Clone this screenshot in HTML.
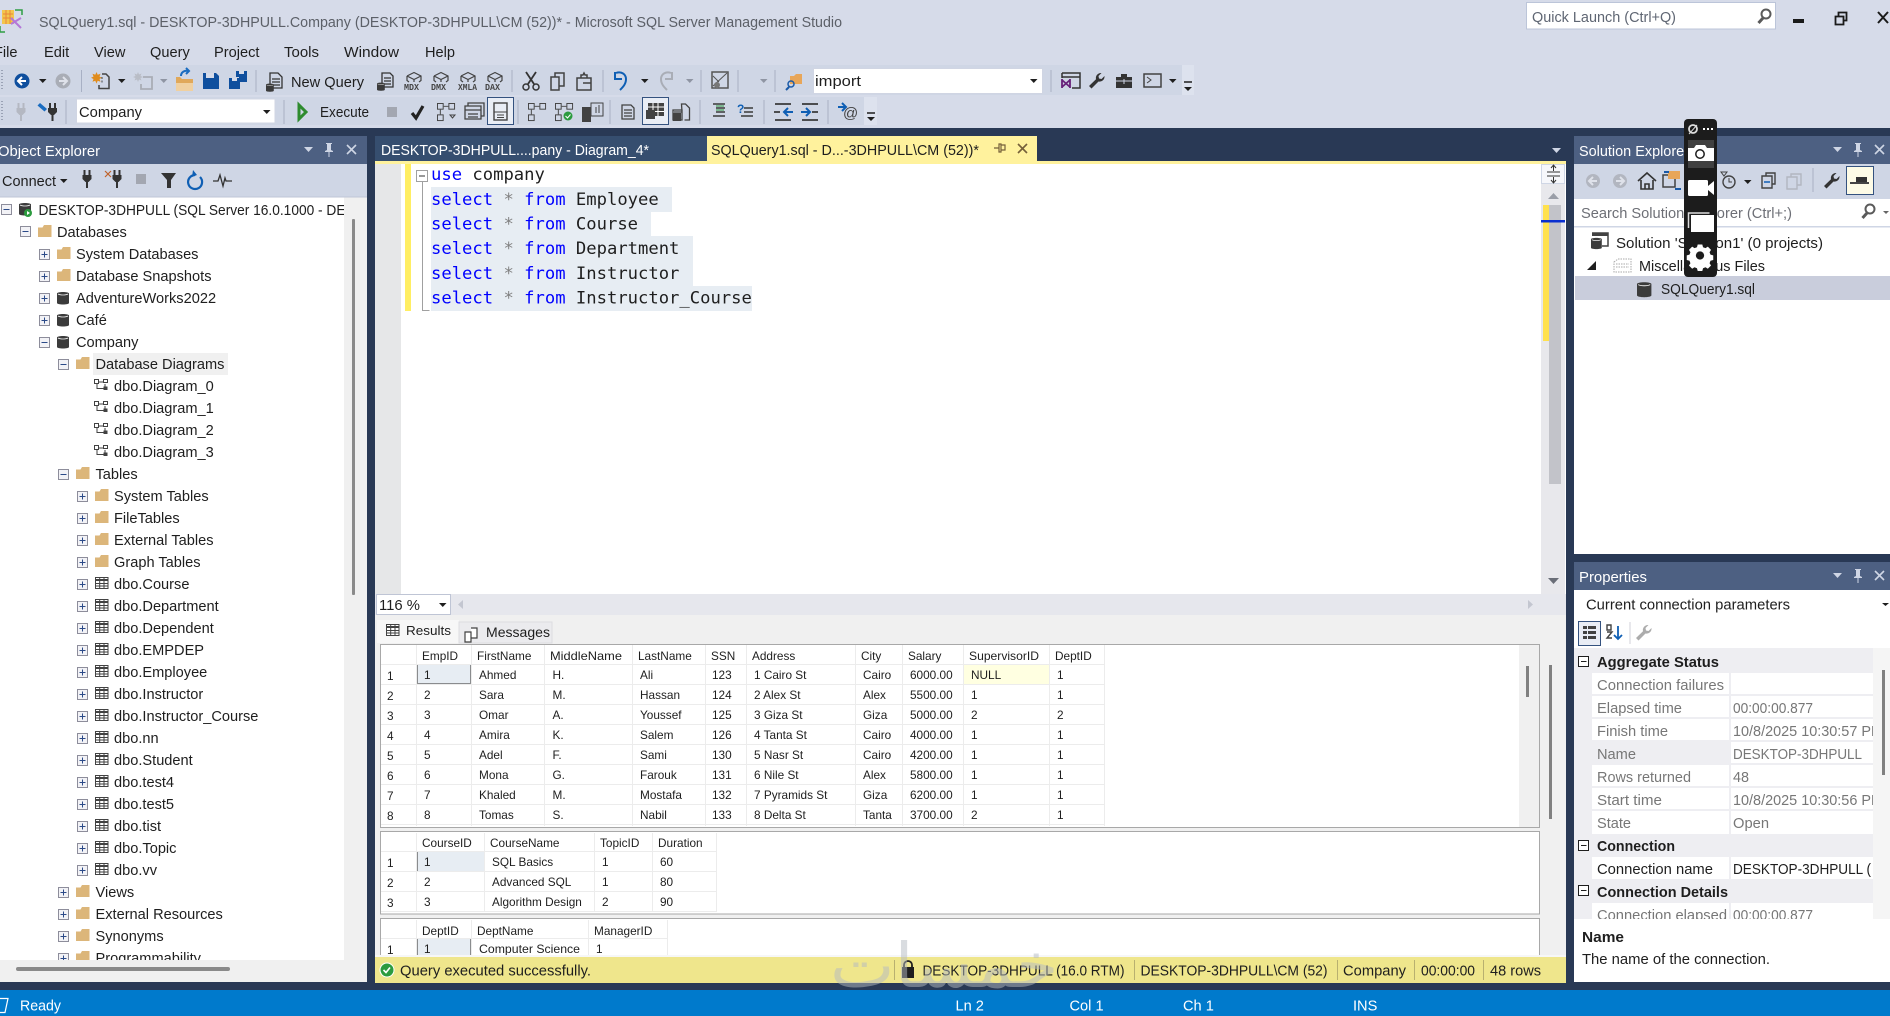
<!DOCTYPE html>
<html lang="en"><head><meta charset="utf-8"><title>SSMS</title>
<style>
html,body{margin:0;padding:0;background:#293955;width:1890px;height:1016px;overflow:hidden}
svg{display:block}
text{font-family:"Liberation Sans",sans-serif;font-size:14.6px;fill:#1e1e1e;white-space:pre}
.g text,text.g{font-size:11.8px;fill:#1e1e1e}
.c text{font-family:"DejaVu Sans Mono","Liberation Mono",monospace;font-size:17.2px}
.w{fill:#fff}
.d{fill:#777}
.b{font-weight:bold}
.k{fill:none;stroke:#424242;stroke-width:1.5}
.s{stroke:#a8b0c4;stroke-width:1;fill:none}
.l{font-family:"Liberation Mono",monospace;font-size:9.5px;font-weight:bold;fill:#444}
</style></head><body>
<svg xmlns="http://www.w3.org/2000/svg" width="1890" height="1016" viewBox="0 0 1890 1016">
<defs>
<g id="p"><rect x=".5" y=".5" width="10" height="10" fill="#f2f2f6" stroke="#8d8d9b"/><path d="M2.5 5.5h6M5.5 2.5v6" stroke="#2b4a88" stroke-width="1"/></g>
<g id="m"><rect x=".5" y=".5" width="10" height="10" fill="#f2f2f6" stroke="#8d8d9b"/><path d="M2.5 5.5h6" stroke="#2b4a88" stroke-width="1"/></g>
<path id="f" d="M0 2.5V12H13.500V0H6L4.500 2.500Z" fill="#dcb67a"/>
<g id="t"><rect x=".5" y=".5" width="12.500" height="11" fill="#fff" stroke="#424242"/><path d="M0 3h13.500" stroke="#424242" stroke-width="2"/><path d="M0 6.500h13M0 9h13M4.700 0v12M9 0v12" stroke="#424242" stroke-width="1"/></g>
<g id="dg"><path d="M3 5V9.500H10M5 3H10M11 5V10" fill="none" stroke="#424242"/><rect x=".5" y=".5" width="4" height="4" fill="#fff" stroke="#424242"/><rect x="9.500" y=".5" width="4" height="3" fill="#fff" stroke="#424242"/><rect x="9.500" y="7.500" width="4" height="3.500" fill="#424242"/></g>
<g id="cy"><path d="M0 2.500C0 .5 12 .5 12 2.500V12C12 14 0 14 0 12Z" fill="#3b3b3b"/><path d="M1 3c2 1.300 8 1.300 10 0" fill="none" stroke="#eee" stroke-width=".8"/></g>
<path id="x" d="M0 0L9 9M9 0L0 9" fill="none" stroke-width="1.6"/>
<g id="pin"><path d="M2 0h6v1H7v6l2 1v1H1V8l2-1V1H2zM4.500 9v5h1V9z" fill="#cfd6e5"/></g>
<path id="dd" d="M0 0h7.500L3.750 4z" fill="#1e1e1e"/>
<path id="ddg" d="M0 0h7.500L3.750 4z" fill="#8f95a3"/>
<g id="cube"><path d="M1 4L8 .5l7 3.500v4.500l-2 1.500M3 10L1 8.500V4M1 4l7 3.500 7-3.500M8 7.500v2.500" fill="none" stroke="#424242" stroke-width="1.200"/></g>
<g id="wr"><path d="M12 0a5 5 0 0 0-5 6.200L0 13l2.500 2.500 7-7A5 5 0 0 0 15.500 3l-3 3-2.500-.5L9.500 3l3-3z" fill="#333"/></g>
<g id="flow"><rect x=".5" y=".5" width="6" height="6" fill="none" stroke="#424242"/><rect x="12.500" y=".5" width="6" height="6" fill="none" stroke="#424242"/><rect x=".5" y="12.500" width="6" height="6" fill="none" stroke="#424242"/><path d="M7 3.500h5M3.500 7v5" stroke="#424242"/></g>
<g id="plug"><path d="M2 0v5M7 0v5" stroke="currentColor" stroke-width="2" fill="none"/><path d="M0 5h9v4l-3 3h-3L0 9zM3.500 12h2v6h-2z" fill="currentColor"/></g>
</defs>

<!-- chrome -->
<rect width="1890" height="1016" fill="#293955"/>
<rect width="1890" height="128" fill="#d6dbe9"/>
<rect x="0" y="65" width="1182" height="30" fill="#cfd6e5"/><rect x="1182" y="65" width="12" height="30" fill="#dde2ee"/>
<rect x="0" y="97" width="864" height="28" fill="#cfd6e5"/><rect x="864" y="97" width="13" height="28" fill="#dde2ee"/>

<!-- logo -->
<rect x="2" y="10" width="12" height="14" fill="#f3c64d"/><path d="M3 14h10M3 18h10M6 10v14M10 10v14" stroke="#e8863a" stroke-width="1"/>
<path d="M11 24L21 18M11 18l10 10" stroke="#b478d8" stroke-width="2" fill="none"/><path d="M15 10h7v5M0 26v6h5" stroke="#2f9e44" stroke-width="1.500" fill="none"/>

<text x="39" y="27" textLength="803" lengthAdjust="spacingAndGlyphs" style="fill:#5c6068">SQLQuery1.sql - DESKTOP-3DHPULL.Company (DESKTOP-3DHPULL\CM (52))* - Microsoft SQL Server Management Studio</text>
<rect x="1526.500" y="2.500" width="249" height="26.500" fill="#fff" stroke="#bcc5d9"/>
<text x="1532" y="22" style="fill:#5f6673" textLength="144" lengthAdjust="spacingAndGlyphs">Quick Launch (Ctrl+Q)</text>
<circle cx="1766" cy="14" r="4.500" fill="none" stroke="#5a5a5a" stroke-width="2"/><path d="M1763 18l-4.500 5" stroke="#5a5a5a" stroke-width="3"/>
<rect x="1793" y="19" width="11" height="4" fill="#1a1a1a"/>
<path d="M1835.500 16.500h8v8h-8zM1838.500 16v-3.500h8v8H1844" fill="none" stroke="#1a1a1a" stroke-width="1.800"/>
<path d="M1878 12l10 11M1888 12l-10 11" stroke="#1a1a1a" stroke-width="2" fill="none"/>

<!-- menu -->
<g style="fill:#1e1e1e"><text x="-6" y="57">File</text><text x="44" y="57">Edit</text><text x="94" y="57">View</text><text x="150" y="57">Query</text><text x="214" y="57">Project</text><text x="284" y="57" textLength="35" lengthAdjust="spacingAndGlyphs">Tools</text><text x="344" y="57" textLength="55" lengthAdjust="spacingAndGlyphs">Window</text><text x="425" y="57">Help</text></g>

<!-- toolbar 1 -->
<path d="M2 70v20" stroke="#9aa2b5" stroke-width="2" stroke-dasharray="1 2"/>
<circle cx="22" cy="81" r="7.500" fill="#0f4f9e"/><path d="M26 81h-7M22 77l-4 4 4 4" fill="none" stroke="#fff" stroke-width="2"/>
<use href="#dd" x="39" y="79"/>
<circle cx="63" cy="81" r="7.500" fill="#a9adb6"/><path d="M59 81h7M63 77l4 4-4 4" fill="none" stroke="#dfe2ea" stroke-width="2"/>
<path d="M81.500 70v22" class="s"/>
<path d="M96.500 72l1.200 2.800 2.800-1-1 2.800 2.500 1.200-2.500 1.200 1 2.800-2.800-1-1.200 2.800-1.200-2.800-2.800 1 1-2.800-2.500-1.200 2.500-1.200-1-2.800 2.800 1z" fill="#e08c1d"/>
<path d="M102 74h4l3 3v11.500h-10V85" fill="none" stroke="#444" stroke-width="1.500"/><path d="M102 77v7" stroke="#444" stroke-dasharray="2 1.500"/>
<use href="#dd" x="118" y="79"/>
<path d="M138 72l1 2.500 2.500-1-1 2.500 2.500 1-2.500 1 1 2.500-2.500-1-1 2.500-1-2.500-2.500 1 1-2.500-2.500-1 2.500-1-1-2.500 2.500 1z" fill="#b9bdc6"/><path d="M143 77h9v12h-11v-5" fill="none" stroke="#a9adb6" stroke-width="1.800"/>
<use href="#ddg" x="160" y="79"/>
<path d="M176 77h4l2 2h11v12h-17z" fill="#e0a85a"/><path d="M176 83h17v8h-17z" fill="#f0d0a0"/><path d="M181 76c0-4 4-6 7-5M186 68l3 3-3 3" fill="none" stroke="#1a6cc0" stroke-width="2"/>
<path d="M203 73h13l3 3v13h-16z" fill="#0f4f9e"/><rect x="206" y="73" width="8" height="5" fill="#d6dbe9"/>
<path d="M229 78h11v11h-11z" fill="#0f4f9e"/><rect x="232" y="78" width="5" height="3" fill="#d6dbe9"/><path d="M236 71h11l0 11h-8v-5h-3z" fill="#0f4f9e"/><rect x="239" y="71" width="5" height="3" fill="#d6dbe9"/>
<path d="M256 70v22" class="s"/>
<path d="M270 73h8l4 4v11h-12zM272 79h8M272 82h8M272 85h8" fill="none" stroke="#333" stroke-width="1.300"/><use href="#cy" transform="translate(266 83) scale(.65)"/>
<text x="291" y="87" textLength="73" lengthAdjust="spacingAndGlyphs">New Query</text>
<path d="M382 73h8l3 3v11h-11zM384 78h7M384 81h7M384 84h7" fill="none" stroke="#333" stroke-width="1.300"/><use href="#cy" transform="translate(377 82) scale(.65)"/>
<use href="#cube" x="406" y="72"/><use href="#cube" x="433" y="72"/><use href="#cube" x="460" y="72"/><use href="#cube" x="487" y="72"/>
<text class="l" x="404" y="90" textLength="15" lengthAdjust="spacingAndGlyphs">MDX</text><text class="l" x="431" y="90" textLength="15" lengthAdjust="spacingAndGlyphs">DMX</text><text class="l" x="458" y="90" textLength="19" lengthAdjust="spacingAndGlyphs">XMLA</text><text class="l" x="485" y="90" textLength="15" lengthAdjust="spacingAndGlyphs">DAX</text>
<path d="M512 70v22" class="s"/>
<path d="M526 72l8 12M536 72l-8 12" stroke="#333" stroke-width="1.800" fill="none"/><circle cx="526" cy="87" r="3" fill="none" stroke="#333" stroke-width="1.500"/><circle cx="536" cy="87" r="3" fill="none" stroke="#333" stroke-width="1.500"/>
<path d="M551 77h8v13h-8zM555 77v-4h9v13h-5" fill="none" stroke="#424242" stroke-width="1.500"/>
<path d="M577 78h14v12h-14zM581 78v-3h2l1-2 1 2h2v3M583 83h8v7h-8" fill="none" stroke="#424242" stroke-width="1.500"/>
<path d="M603 70v22" class="s"/>
<path d="M616 73c5-2 10 1 10 6 0 5-3 8-6 11" fill="none" stroke="#0f5fb4" stroke-width="2"/><path d="M615 72v7h7" fill="none" stroke="#0f5fb4" stroke-width="2"/>
<use href="#dd" x="641" y="79"/>
<path d="M671 73c-5-2-10 1-10 6 0 5 3 8 6 11" fill="none" stroke="#a9adb6" stroke-width="2"/><path d="M672 72v7h-7" fill="none" stroke="#a9adb6" stroke-width="2"/>
<use href="#ddg" x="686" y="79"/>
<path d="M701 70v22" class="s"/>
<rect x="712" y="72" width="16" height="16" fill="none" stroke="#555" stroke-width="1.500"/><path d="M713 86l14-13M713 76l6 6" stroke="#555" fill="none"/><circle cx="717" cy="85" r="3" fill="#777"/>
<path d="M738 70v22" class="s"/><use href="#ddg" x="760" y="79"/><path d="M775 70v22" class="s"/>
<path d="M790 76h4l2-2h6v10h-12z" fill="#e8a659"/><circle cx="791" cy="84" r="3" fill="none" stroke="#1a5aa8" stroke-width="1.500"/><path d="M789 87l-3 3" stroke="#1a5aa8" stroke-width="2"/>
<rect x="813.500" y="68.500" width="229" height="25" fill="#fff" stroke="#d0d5e3"/><text x="815" y="86" textLength="46" lengthAdjust="spacingAndGlyphs">import</text><use href="#dd" x="1030" y="79"/>
<path d="M1051 70v22" class="s"/>
<path d="M1062 73h18v15h-8M1062 73v5M1062 77h18" fill="none" stroke="#333" stroke-width="1.500"/><path d="M1062 80l8 7M1062 87l8-7M1062 79v9M1070 79v9" stroke="#68217a" stroke-width="1.800" fill="none"/>
<use href="#wr" x="1089" y="73"/>
<path d="M1116 77h16v11h-16zM1121 77v-3h6v3" fill="#333"/><path d="M1116 81h16M1124 79v5" stroke="#cfd6e5"/>
<rect x="1144" y="74" width="17" height="13" fill="none" stroke="#424242" stroke-width="1.500"/><path d="M1147 77l4 3-4 3" fill="none" stroke="#424242"/>
<use href="#dd" x="1169" y="79"/>
<path d="M1184 82h8" stroke="#1e1e1e" stroke-width="1.500"/><path d="M1184 87h8L1188 91z" fill="#1e1e1e"/>

<!-- toolbar 2 -->
<path d="M2 101v20" stroke="#9aa2b5" stroke-width="2" stroke-dasharray="1 2"/>
<use href="#plug" x="16.500" y="103" style="color:#b4b8c2"/>
<use href="#plug" x="48" y="103" style="color:#333"/><path d="M40 103l7 6-2.500 2.500-7-6z" fill="#1a6cc0"/>
<path d="M66 100v24" class="s"/>
<rect x="76.500" y="99" width="198.500" height="24" fill="#fff" stroke="#d0d5e3"/><text x="79" y="117" textLength="63" lengthAdjust="spacingAndGlyphs">Company</text><use href="#dd" x="263" y="110"/>
<path d="M284 100v24" class="s"/>
<path d="M299 105l7 7-7 7z" fill="none" stroke="#2e8b2e" stroke-width="3"/>
<text x="320" y="117" textLength="49" lengthAdjust="spacingAndGlyphs">Execute</text>
<rect x="387" y="107" width="10" height="10" fill="#a3a7b1"/>
<path d="M412 113l4 5 7-12" fill="none" stroke="#222" stroke-width="3.200"/>
<use href="#flow" transform="translate(437 103) scale(.95)"/><path d="M450 115h5l-2.500 3z" fill="none" stroke="#424242"/>
<path d="M465 106h16v13h-16zM465 110h16M468 114h10M468 117h10M468 106v-3h16v13h-3" fill="none" stroke="#424242" stroke-width="1.300"/>
<rect x="487.500" y="97.500" width="26" height="27" fill="#e9edf5" stroke="#34527f" stroke-width="1"/><rect x="494" y="103" width="13" height="17" fill="none" stroke="#424242" stroke-width="1.400"/><path d="M494 112h13M497 115h7M497 117.500h7" stroke="#424242"/>
<path d="M518 100v24" class="s"/>
<use href="#flow" transform="translate(528 103) scale(.95)"/>
<use href="#flow" transform="translate(555 103) scale(.95)"/><circle cx="568" cy="116" r="4.500" fill="#2c9b3f"/><path d="M565.500 116l2 2 3-3.500" stroke="#fff" fill="none"/>
<rect x="582" y="107" width="9" height="15" fill="#424242"/><rect x="591" y="103" width="12" height="13" fill="none" stroke="#424242"/><path d="M596 107v6M599 105v8" stroke="#424242"/>
<path d="M610 100v24" class="s"/>
<path d="M622 105h9l3 3v11h-12zM624 110h8M624 113h8M624 116h8" fill="none" stroke="#424242" stroke-width="1.300"/>
<rect x="642.500" y="97.500" width="26" height="27" fill="#e9edf5" stroke="#34527f" stroke-width="1"/><g transform="translate(648 103)"><rect width="16" height="13" fill="#424242"/><path d="M0 4h16M0 8.500h16M5 0v13M10 0v13" stroke="#fff"/><rect x="-2" y="7" width="9" height="9" fill="#424242"/></g>
<path d="M674 112h8l-.5-8h4l4 4v12h-5M673 110h9v10h-9z" fill="none" stroke="#424242" stroke-width="1.300"/><rect x="673" y="113" width="8" height="8" fill="#424242"/>
<path d="M700 100v24" class="s"/>
<path d="M713 104h12M716 108h9M716 112h9M713 116h12" stroke="#3a3a3a" stroke-width="1.500"/><path d="M716 106h8M716 110h8" stroke="#2c9b3f"/>
<text x="737" y="113" style="fill:#0f5fb4;font-weight:bold;font-size:12px">?</text><path d="M744 108h9M744 112h9M741 116h12" stroke="#3a3a3a" stroke-width="1.500"/>
<path d="M764 100v24" class="s"/>
<path d="M775 104h16M775 120h16M774 112h6" stroke="#3a3a3a" stroke-width="1.800"/><path d="M793 112h-9M788 108l-4 4 4 4" stroke="#0f5fb4" stroke-width="2" fill="none"/>
<path d="M802 104h16M802 120h16M812 112h6" stroke="#3a3a3a" stroke-width="1.800"/><path d="M801 112h9M806 108l4 4-4 4" stroke="#0f5fb4" stroke-width="2" fill="none"/>
<path d="M828 100v24" class="s"/>
<path d="M838 107h7M842 103l4 4-4 4" stroke="#0f5fb4" stroke-width="2" fill="none"/><text x="843" y="118" style="font-size:15px;fill:#424242">@</text>
<path d="M867 113h8" stroke="#1e1e1e" stroke-width="1.500"/><path d="M867 117h8L871 121z" fill="#1e1e1e"/>

<!-- Object Explorer -->
<rect x="0" y="136" width="367" height="846" fill="#f0f0f0"/>
<rect x="0" y="136" width="367" height="28" fill="#4d6082"/>
<text class="w" x="-2" y="156" textLength="102" lengthAdjust="spacingAndGlyphs">Object Explorer</text>
<path d="M304 147h9l-4.500 5z" fill="#cfd6e5"/><use href="#pin" x="324" y="143"/><use href="#x" x="347" y="145" stroke="#cfd6e5"/>
<rect x="0" y="164" width="367" height="33" fill="#cfd6e5"/>
<text x="2" y="186" textLength="54" lengthAdjust="spacingAndGlyphs">Connect</text><use href="#dd" x="60" y="179"/>
<use href="#plug" x="82.500" y="170" style="color:#333"/>
<use href="#plug" x="112.500" y="170" style="color:#333"/><path d="M105 171l6 6M111 171l-6 6" stroke="#c0622a" stroke-width="1.200"/>
<rect x="136" y="174" width="10" height="10" fill="#a3a7b1"/>
<path d="M161 173h15l-5 7v8h-4v-8z" fill="#333"/>
<path d="M195 175a7 7 0 1 0 5 2" fill="none" stroke="#0f5fb4" stroke-width="2.200"/><path d="M193 170l4 5-5 2z" fill="#0f5fb4"/>
<path d="M213 181h5l2-6 3 11 2-8 1 3h6" fill="none" stroke="#333" stroke-width="1.300"/>
<rect x="0" y="197" width="344" height="763" fill="#fff"/>
<rect x="0" y="196.500" width="367" height="1" fill="#bfc6d6"/>
<rect x="352" y="219" width="3" height="376" rx="1" fill="#8a8a8a"/>
<rect x="16" y="967" width="214" height="4" rx="2" fill="#8a8a8a"/>
<rect x="93" y="353" width="135" height="22" fill="#f0f0f0"/>

<svg x="0" y="197" width="344" height="763" viewBox="0 197 344 763">
<use href="#m" x="1" y="204"/>
<use href="#cy" x="19" y="202"/><circle cx="28" cy="213" r="4" fill="#2c9b3f"/><path d="M27 211v4l3-2z" fill="#fff"/>
<text x="38.500" y="215" textLength="307" lengthAdjust="spacingAndGlyphs">DESKTOP-3DHPULL (SQL Server 16.0.1000 - DE</text>
<use href="#m" x="20" y="226"/><use href="#f" x="38" y="225"/><text x="57" y="237">Databases</text>
<use href="#p" x="39" y="249"/><use href="#f" x="57" y="247"/><text x="76" y="259">System Databases</text>
<use href="#p" x="39" y="271"/><use href="#f" x="57" y="269"/><text x="76" y="281">Database Snapshots</text>
<use href="#p" x="39" y="293"/><use href="#cy" x="57" y="291"/><text x="76" y="303">AdventureWorks2022</text>
<use href="#p" x="39" y="315"/><use href="#cy" x="57" y="313"/><text x="76" y="325">Café</text>
<use href="#m" x="39" y="337"/><use href="#cy" x="57" y="335"/><text x="76" y="347">Company</text>
<use href="#m" x="58" y="359"/><use href="#f" x="76" y="357"/><text x="95.500" y="369">Database Diagrams</text>
<use href="#dg" x="94" y="379"/><text x="114" y="391">dbo.Diagram_0</text>
<use href="#dg" x="94" y="401"/><text x="114" y="413">dbo.Diagram_1</text>
<use href="#dg" x="94" y="423"/><text x="114" y="435">dbo.Diagram_2</text>
<use href="#dg" x="94" y="445"/><text x="114" y="457">dbo.Diagram_3</text>
<use href="#m" x="58" y="469"/><use href="#f" x="76" y="467"/><text x="95.500" y="479">Tables</text>
<use href="#p" x="77" y="491"/><use href="#f" x="95" y="489"/><text x="114" y="501">System Tables</text>
<use href="#p" x="77" y="513"/><use href="#f" x="95" y="511"/><text x="114" y="523">FileTables</text>
<use href="#p" x="77" y="535"/><use href="#f" x="95" y="533"/><text x="114" y="545">External Tables</text>
<use href="#p" x="77" y="557"/><use href="#f" x="95" y="555"/><text x="114" y="567">Graph Tables</text>
<use href="#p" x="77" y="579"/><use href="#t" x="95" y="577"/><text x="114" y="589">dbo.Course</text>
<use href="#p" x="77" y="601"/><use href="#t" x="95" y="599"/><text x="114" y="611">dbo.Department</text>
<use href="#p" x="77" y="623"/><use href="#t" x="95" y="621"/><text x="114" y="633">dbo.Dependent</text>
<use href="#p" x="77" y="645"/><use href="#t" x="95" y="643"/><text x="114" y="655">dbo.EMPDEP</text>
<use href="#p" x="77" y="667"/><use href="#t" x="95" y="665"/><text x="114" y="677">dbo.Employee</text>
<use href="#p" x="77" y="689"/><use href="#t" x="95" y="687"/><text x="114" y="699">dbo.Instructor</text>
<use href="#p" x="77" y="711"/><use href="#t" x="95" y="709"/><text x="114" y="721">dbo.Instructor_Course</text>
<use href="#p" x="77" y="733"/><use href="#t" x="95" y="731"/><text x="114" y="743">dbo.nn</text>
<use href="#p" x="77" y="755"/><use href="#t" x="95" y="753"/><text x="114" y="765">dbo.Student</text>
<use href="#p" x="77" y="777"/><use href="#t" x="95" y="775"/><text x="114" y="787">dbo.test4</text>
<use href="#p" x="77" y="799"/><use href="#t" x="95" y="797"/><text x="114" y="809">dbo.test5</text>
<use href="#p" x="77" y="821"/><use href="#t" x="95" y="819"/><text x="114" y="831">dbo.tist</text>
<use href="#p" x="77" y="843"/><use href="#t" x="95" y="841"/><text x="114" y="853">dbo.Topic</text>
<use href="#p" x="77" y="865"/><use href="#t" x="95" y="863"/><text x="114" y="875">dbo.vv</text>
<use href="#p" x="58" y="887"/><use href="#f" x="76" y="885"/><text x="95.500" y="897">Views</text>
<use href="#p" x="58" y="909"/><use href="#f" x="76" y="907"/><text x="95.500" y="919">External Resources</text>
<use href="#p" x="58" y="931"/><use href="#f" x="76" y="929"/><text x="95.500" y="941">Synonyms</text>
<use href="#p" x="58" y="953"/><use href="#f" x="76" y="951"/><text x="95.500" y="963">Programmability</text>
</svg>

<!-- Tabs -->
<rect x="375" y="136" width="332" height="25" fill="#364e6f"/>
<text class="w" x="381" y="155" textLength="268" lengthAdjust="spacingAndGlyphs">DESKTOP-3DHPULL....pany - Diagram_4*</text>
<rect x="707" y="136" width="330" height="25" fill="#fff29d"/>
<text x="711" y="155" textLength="268" lengthAdjust="spacingAndGlyphs">SQLQuery1.sql - D...-3DHPULL\CM (52))*</text>
<path d="M994 148h5M999 144v8h2v-8zM1001 145h4v5h-4" fill="none" stroke="#75603a" stroke-width="1.200"/>
<use href="#x" x="1018" y="144" stroke="#75603a"/>
<path d="M1552 148h9l-4.500 5z" fill="#cfd6e5"/>

<!-- Editor -->
<rect x="375" y="161" width="1191" height="3" fill="#fff29d"/>
<rect x="375" y="164" width="1191" height="430" fill="#fff"/>
<rect x="375" y="164" width="26" height="430" fill="#e6e7e8"/>
<rect x="405" y="164" width="6" height="147" fill="#ffee62"/>
<rect x="416.500" y="170.500" width="11" height="11" fill="#fff" stroke="#a0a0a0"/><path d="M419 176h6" stroke="#333"/>
<path d="M422.500 182v128.500h7" fill="none" stroke="#a0a0a0"/>
<g fill="#e7edf3"><rect x="431" y="187" width="241" height="25"/><rect x="431" y="212" width="220" height="25"/><rect x="431" y="236" width="262" height="25"/><rect x="431" y="261" width="262" height="25"/><rect x="431" y="286" width="321" height="25"/></g>
<g class="c">
<text x="431" y="180"><tspan style="fill:#0000ff">use</tspan> company</text>
<text x="431" y="205"><tspan style="fill:#0000ff">select</tspan> <tspan style="fill:#808080">*</tspan> <tspan style="fill:#0000ff">from</tspan> Employee</text>
<text x="431" y="229.500"><tspan style="fill:#0000ff">select</tspan> <tspan style="fill:#808080">*</tspan> <tspan style="fill:#0000ff">from</tspan> Course</text>
<text x="431" y="254"><tspan style="fill:#0000ff">select</tspan> <tspan style="fill:#808080">*</tspan> <tspan style="fill:#0000ff">from</tspan> Department</text>
<text x="431" y="279"><tspan style="fill:#0000ff">select</tspan> <tspan style="fill:#808080">*</tspan> <tspan style="fill:#0000ff">from</tspan> Instructor</text>
<text x="431" y="303.500"><tspan style="fill:#0000ff">select</tspan> <tspan style="fill:#808080">*</tspan> <tspan style="fill:#0000ff">from</tspan> Instructor_Course</text>
</g>
<!-- editor scroll -->
<rect x="1541" y="164" width="24" height="430" fill="#e8e8ec"/>
<rect x="1541.500" y="164.500" width="23" height="19" fill="#f6f7fb" stroke="#cfd6e5"/>
<path d="M1547 172h13M1547 176h13" stroke="#333"/><path d="M1553.500 165v6M1553.500 177v6M1551 168l2.500-3 2.500 3M1551 180l2.500 3 2.500-3" fill="none" stroke="#333"/>
<path d="M1548 199h11l-5.500-6z" fill="#9a9ea8"/>
<rect x="1549" y="205" width="12" height="279" fill="#c2c3c9"/>
<rect x="1543" y="205" width="6" height="136" fill="#ffe14e"/>
<rect x="1541" y="220" width="24" height="2.500" fill="#0a2fd0"/>
<path d="M1548 578h11l-5.500 6z" fill="#6a6e78"/>
<!-- zoom bar -->
<rect x="375" y="594" width="1191" height="21" fill="#e6e7ed"/>
<rect x="376.500" y="594.500" width="74" height="20" fill="#fff" stroke="#bfc5d5"/>
<text x="379" y="610" textLength="41" lengthAdjust="spacingAndGlyphs">116 %</text><use href="#dd" x="439" y="603"/>
<path d="M463 600v9l-5-4.500z" fill="#c3c6d0"/><path d="M1528 600v9l5-4.500z" fill="#c3c6d0"/>

<!-- results -->
<rect x="375" y="615" width="1191" height="342" fill="#f0f0f0"/>
<rect x="377" y="620" width="82" height="23" fill="#f7f7f7"/>
<rect x="459" y="622" width="93" height="21" fill="#ebebee" stroke="#dcdce0"/>
<g transform="translate(386 624)"><use href="#t"/></g>
<text x="406" y="635" style="font-size:13px" textLength="45" lengthAdjust="spacingAndGlyphs">Results</text>
<path d="M465 632h6v10h-6zM471 628h6v10h-6" fill="#fff" stroke="#424242" stroke-width="1.200"/>
<text x="486" y="637" style="font-size:13.500px" textLength="64" lengthAdjust="spacingAndGlyphs">Messages</text>

<rect x="380.500" y="644.500" width="1159" height="183" fill="#fff" stroke="#a8a8a8"/>
<rect x="1519" y="645" width="20" height="182" fill="#f0f0f0"/>
<rect x="1526" y="666" width="3" height="31" fill="#808080"/>
<rect x="1549" y="665" width="3" height="154" fill="#808080"/>
<rect x="963" y="664" width="86" height="20" fill="#ffffe1"/>
<rect x="417.500" y="664.500" width="53" height="19" fill="#e7edf3" stroke="#222" stroke-dasharray="1 1"/>
<path d="M381 664.500H1104M381 684.500H1104M381 704.500H1104M381 724.500H1104M381 744.500H1104M381 764.500H1104M381 784.500H1104M381 804.500H1104M381 824.500H1104M416.500 645V826M471.500 645V826M544.500 645V826M632.500 645V826M705.500 645V826M746.500 645V826M855.500 645V826M902.500 645V826M963.500 645V826M1049.500 645V826M1104.500 645V826" stroke="#ececec" fill="none"/>
<g class="g">
<text x="422" y="660">EmpID</text><text x="477" y="660">FirstName</text><text x="550" y="660" textLength="72" lengthAdjust="spacingAndGlyphs">MiddleName</text><text x="638" y="660">LastName</text><text x="711" y="660">SSN</text><text x="752" y="660">Address</text><text x="861" y="660">City</text><text x="908" y="660">Salary</text><text x="969" y="660" textLength="70" lengthAdjust="spacingAndGlyphs">SupervisorID</text><text x="1055" y="660">DeptID</text>
<text x="387" y="680">1</text><text x="424" y="679">1</text><text x="479" y="679">Ahmed</text><text x="552.500" y="679">H.</text><text x="640" y="679">Ali</text><text x="712" y="679">123</text><text x="754" y="679">1 Cairo St</text><text x="863" y="679">Cairo</text><text x="910" y="679">6000.00</text><text x="971" y="679">NULL</text><text x="1057" y="679">1</text>
<text x="387" y="700">2</text><text x="424" y="699">2</text><text x="479" y="699">Sara</text><text x="552.500" y="699">M.</text><text x="640" y="699">Hassan</text><text x="712" y="699">124</text><text x="754" y="699">2 Alex St</text><text x="863" y="699">Alex</text><text x="910" y="699">5500.00</text><text x="971" y="699">1</text><text x="1057" y="699">1</text>
<text x="387" y="720">3</text><text x="424" y="719">3</text><text x="479" y="719">Omar</text><text x="552.500" y="719">A.</text><text x="640" y="719">Youssef</text><text x="712" y="719">125</text><text x="754" y="719">3 Giza St</text><text x="863" y="719">Giza</text><text x="910" y="719">5000.00</text><text x="971" y="719">2</text><text x="1057" y="719">2</text>
<text x="387" y="740">4</text><text x="424" y="739">4</text><text x="479" y="739">Amira</text><text x="552.500" y="739">K.</text><text x="640" y="739">Salem</text><text x="712" y="739">126</text><text x="754" y="739">4 Tanta St</text><text x="863" y="739">Cairo</text><text x="910" y="739">4000.00</text><text x="971" y="739">1</text><text x="1057" y="739">1</text>
<text x="387" y="760">5</text><text x="424" y="759">5</text><text x="479" y="759">Adel</text><text x="552.500" y="759">F.</text><text x="640" y="759">Sami</text><text x="712" y="759">130</text><text x="754" y="759">5 Nasr St</text><text x="863" y="759">Cairo</text><text x="910" y="759">4200.00</text><text x="971" y="759">1</text><text x="1057" y="759">1</text>
<text x="387" y="780">6</text><text x="424" y="779">6</text><text x="479" y="779">Mona</text><text x="552.500" y="779">G.</text><text x="640" y="779">Farouk</text><text x="712" y="779">131</text><text x="754" y="779">6 Nile St</text><text x="863" y="779">Alex</text><text x="910" y="779">5800.00</text><text x="971" y="779">1</text><text x="1057" y="779">1</text>
<text x="387" y="800">7</text><text x="424" y="799">7</text><text x="479" y="799">Khaled</text><text x="552.500" y="799">M.</text><text x="640" y="799">Mostafa</text><text x="712" y="799">132</text><text x="754" y="799">7 Pyramids St</text><text x="863" y="799">Giza</text><text x="910" y="799">6200.00</text><text x="971" y="799">1</text><text x="1057" y="799">1</text>
<text x="387" y="820">8</text><text x="424" y="819">8</text><text x="479" y="819">Tomas</text><text x="552.500" y="819">S.</text><text x="640" y="819">Nabil</text><text x="712" y="819">133</text><text x="754" y="819">8 Delta St</text><text x="863" y="819">Tanta</text><text x="910" y="819">3700.00</text><text x="971" y="819">2</text><text x="1057" y="819">1</text>
</g>

<rect x="380.500" y="831.500" width="1159" height="82.500" fill="#fff" stroke="#a8a8a8"/>
<rect x="417.500" y="851.500" width="67" height="20" fill="#e7edf3" stroke="#222" stroke-dasharray="1 1"/>
<path d="M381 851.500H716M381 871.500H716M381 891.500H716M381 911.500H716M416.500 833V912M484.500 833V912M594.500 833V912M652.500 833V912M716.500 833V912" stroke="#ececec" fill="none"/>
<g class="g">
<text x="422" y="847">CourseID</text><text x="490" y="847">CourseName</text><text x="600" y="847">TopicID</text><text x="658" y="847">Duration</text>
<text x="387" y="867">1</text><text x="424" y="866">1</text><text x="492" y="866">SQL Basics</text><text x="602" y="866">1</text><text x="660" y="866">60</text>
<text x="387" y="887">2</text><text x="424" y="886">2</text><text x="492" y="886">Advanced SQL</text><text x="602" y="886">1</text><text x="660" y="886">80</text>
<text x="387" y="907">3</text><text x="424" y="906">3</text><text x="492" y="906">Algorithm Design</text><text x="602" y="906">2</text><text x="660" y="906">90</text>
</g>

<rect x="380.500" y="918.500" width="1159" height="60" fill="#fff" stroke="#a8a8a8"/>
<rect x="417.500" y="938.500" width="53" height="20" fill="#e7edf3" stroke="#222" stroke-dasharray="1 1"/>
<path d="M381 938.500H667M381 958.500H667M416.500 920V960M471.500 920V960M588.500 920V960M667.500 920V960" stroke="#ececec" fill="none"/>
<g class="g">
<text x="422" y="935">DeptID</text><text x="477" y="935">DeptName</text><text x="594" y="935">ManagerID</text>
<text x="387" y="954">1</text><text x="424" y="953">1</text><text x="479" y="953" textLength="101" lengthAdjust="spacingAndGlyphs">Computer Science</text><text x="596" y="953">1</text>
</g>

<!-- query status -->
<rect x="375" y="955" width="1191" height="2" fill="#f7f7f7"/>
<rect x="375" y="957" width="1191" height="26" fill="#efe68c"/>
<circle cx="387" cy="970" r="7.500" fill="#fff"/><circle cx="387" cy="970" r="6.500" fill="#2c9b3f"/><path d="M383.500 970l2.500 2.500 4-5" stroke="#fff" stroke-width="1.600" fill="none"/>
<text x="400" y="975.500" textLength="191" lengthAdjust="spacingAndGlyphs">Query executed successfully.</text>
<path d="M894.500 960v20M1134.500 960v20M1337.500 960v20M1414.500 960v20M1483.500 960v20" stroke="#b8b070"/>
<path d="M902 967h12v11h-12z" fill="#1e1e1e"/><path d="M904 967v-2a4 4 0 0 1 8 0v2" fill="none" stroke="#1e1e1e" stroke-width="1.800"/>
<text x="922.500" y="975.500" textLength="202" lengthAdjust="spacingAndGlyphs">DESKTOP-3DHPULL (16.0 RTM)</text>
<text x="1140.500" y="975.500" textLength="187" lengthAdjust="spacingAndGlyphs">DESKTOP-3DHPULL\CM (52)</text>
<text x="1343" y="975.500" textLength="63" lengthAdjust="spacingAndGlyphs">Company</text>
<text x="1421" y="975.500" textLength="54" lengthAdjust="spacingAndGlyphs">00:00:00</text>
<text x="1490" y="975.500" textLength="51" lengthAdjust="spacingAndGlyphs">48 rows</text>

<!-- status bar -->
<rect x="0" y="990" width="1890" height="26" fill="#007acc"/>
<path d="M0 998.500h8l-3 14H0" fill="none" stroke="#fff" stroke-width="1.200"/>
<text class="w" x="20" y="1010.500" textLength="41" lengthAdjust="spacingAndGlyphs">Ready</text>
<text class="w" x="955.500" y="1010.500">Ln 2</text><text class="w" x="1069.500" y="1010.500">Col 1</text><text class="w" x="1183" y="1010.500">Ch 1</text><text class="w" x="1353" y="1010.500">INS</text>

<!-- Solution Explorer -->
<rect x="1574" y="136" width="316" height="418" fill="#fff"/>
<rect x="1574" y="136" width="316" height="28" fill="#4d6082"/>
<text class="w" x="1579" y="156" textLength="110" lengthAdjust="spacingAndGlyphs">Solution Explorer</text>
<path d="M1833 147h9l-4.500 5z" fill="#cfd6e5"/><use href="#pin" x="1853" y="143"/><use href="#x" x="1875" y="145" stroke="#cfd6e5"/>
<rect x="1574" y="164" width="316" height="35" fill="#cfd6e5"/>
<circle cx="1593" cy="181" r="7" fill="#b2b6c0"/><path d="M1597 181h-7M1593 177l-4 4 4 4" fill="none" stroke="#dfe2ea" stroke-width="2"/>
<circle cx="1620" cy="181" r="7" fill="#b2b6c0"/><path d="M1616 181h7M1620 177l4 4-4 4" fill="none" stroke="#dfe2ea" stroke-width="2"/>
<path d="M1638 181l9-8 9 8M1641 180v9h12v-9M1645 189v-5h4v5" fill="none" stroke="#333" stroke-width="1.600"/>
<rect x="1663" y="175" width="12" height="12" fill="none" stroke="#424242" stroke-width="1.500"/><rect x="1668" y="171" width="12" height="8" fill="#e8a659"/><path d="M1664 172h5M1675 189h6" stroke="#1a5aa8" stroke-width="2"/>
<circle cx="1729" cy="182" r="6" fill="none" stroke="#424242" stroke-width="1.400"/><path d="M1729 178v4h3M1721 172h6l-3 4z" fill="none" stroke="#424242"/>
<use href="#dd" x="1744" y="180"/>
<path d="M1762 176h10v12h-10zM1766 176v-3h9v11h-3" fill="none" stroke="#424242" stroke-width="1.400"/><path d="M1764 182h6" stroke="#0f5fb4" stroke-width="1.500"/>
<path d="M1787 177h10v12h-10zM1791 177v-3h10v11h-4" fill="none" stroke="#b2b6c0" stroke-width="1.400"/>
<path d="M1813 168v24" class="s"/>
<use href="#wr" x="1824" y="173"/>
<rect x="1846.500" y="166.500" width="27" height="28" fill="#fdfbe6" stroke="#34527f"/><rect x="1850" y="182" width="19" height="2" fill="#444"/><rect x="1856" y="177" width="11" height="5" fill="#333"/>
<rect x="1575" y="199" width="315" height="27" fill="#fff"/>
<rect x="1574" y="226" width="316" height="1.500" fill="#cfd6e5"/>
<text x="1581" y="218" style="fill:#6d6f76" textLength="211" lengthAdjust="spacingAndGlyphs">Search Solution Explorer (Ctrl+;)</text>
<circle cx="1870" cy="209" r="4.500" fill="none" stroke="#5a5a5a" stroke-width="2"/><path d="M1867 213l-4.500 5" stroke="#5a5a5a" stroke-width="3"/>
<path d="M1883 211h6l-3 3z" fill="#666"/>
<path d="M1592 233h16v13h-6" fill="none" stroke="#424242" stroke-width="1.500"/><path d="M1592 233h16v3h-16z" fill="#424242"/><use href="#cy" transform="translate(1591 237) scale(.9)"/>
<text x="1616" y="248" textLength="207" lengthAdjust="spacingAndGlyphs">Solution 'Solution1' (0 projects)</text>
<path d="M1596 261v9h-9z" fill="#1e1e1e"/>
<path d="M1614 262l4-3h13v13h-17zM1616 264h13M1616 267h13" fill="none" stroke="#a8a8a8" stroke-dasharray="1.500 1"/>
<text x="1639" y="271" textLength="126" lengthAdjust="spacingAndGlyphs">Miscellaneous Files</text>
<rect x="1575" y="276" width="315" height="24" fill="#c9cddc"/>
<use href="#cy" transform="translate(1637 281) scale(1.200)"/>
<text x="1661" y="294" textLength="94" lengthAdjust="spacingAndGlyphs">SQLQuery1.sql</text>

<!-- Properties -->
<rect x="1574" y="562" width="316" height="420" fill="#fff"/>
<rect x="1574" y="562" width="316" height="28" fill="#4d6082"/>
<text class="w" x="1579" y="582" textLength="68" lengthAdjust="spacingAndGlyphs">Properties</text>
<path d="M1833 573h9l-4.500 5z" fill="#cfd6e5"/><use href="#pin" x="1853" y="569"/><use href="#x" x="1875" y="571" stroke="#cfd6e5"/>
<text x="1586" y="609.500" textLength="204" lengthAdjust="spacingAndGlyphs">Current connection parameters</text>
<path d="M1882 603h7l-3.500 3z" fill="#1e1e1e"/>
<rect x="1578.500" y="621.500" width="22" height="24" fill="#e9edf5" stroke="#34527f"/><g transform="translate(1583 626)" fill="#424242"><rect width="4" height="3"/><rect x="5" width="8" height="3"/><rect y="5" width="4" height="3"/><rect x="5" y="5" width="8" height="3"/><rect y="10" width="4" height="3"/><rect x="5" y="10" width="8" height="3"/></g>
<path d="M1607 625h4v5h-4zM1607 632h5l-5 6h5" fill="none" stroke="#424242" stroke-width="1.400"/><path d="M1618 626v13M1614 635l4 4 4-4" stroke="#0f5fb4" stroke-width="1.800" fill="none"/>
<path d="M1630 622v22" stroke="#d0d0d8"/>
<g opacity=".4"><use href="#wr" x="1636" y="625"/></g>
<rect x="1574" y="648" width="299" height="271" fill="#eeeef2"/>
<g fill="#fff"><rect x="1592" y="673" width="137" height="21"/><rect x="1731" y="673" width="142" height="21"/><rect x="1592" y="696" width="137" height="21"/><rect x="1731" y="696" width="142" height="21"/><rect x="1592" y="719" width="137" height="21"/><rect x="1731" y="719" width="142" height="21"/><rect x="1731" y="742" width="142" height="21"/><rect x="1592" y="765" width="137" height="21"/><rect x="1731" y="765" width="142" height="21"/><rect x="1592" y="788" width="137" height="21"/><rect x="1731" y="788" width="142" height="21"/><rect x="1592" y="811" width="137" height="23"/><rect x="1731" y="811" width="142" height="23"/><rect x="1592" y="857" width="137" height="22"/><rect x="1731" y="857" width="142" height="22"/><rect x="1592" y="903" width="137" height="16"/><rect x="1731" y="903" width="142" height="16"/></g>
<rect x="1873" y="648" width="17" height="271" fill="#f5f5f5"/><rect x="1882" y="670" width="3" height="105" fill="#808080"/>
<g fill="#fff" stroke="#1e1e1e"><rect x="1578.500" y="656.500" width="10" height="10"/><rect x="1578.500" y="840.500" width="10" height="10"/><rect x="1578.500" y="885.500" width="10" height="10"/></g>
<path d="M1581 661.500h5.500M1581 845.500h5.500M1581 890.500h5.500" stroke="#1e1e1e"/>
<text class="b" x="1597" y="667" textLength="122" lengthAdjust="spacingAndGlyphs">Aggregate Status</text>
<text class="b" x="1597" y="851" textLength="78" lengthAdjust="spacingAndGlyphs">Connection</text>
<text class="b" x="1597" y="897" textLength="131" lengthAdjust="spacingAndGlyphs">Connection Details</text>
<svg x="1592" y="648" width="281" height="271" viewBox="1592 648 281 271">
<text class="d" x="1597" y="690" textLength="127" lengthAdjust="spacingAndGlyphs">Connection failures</text>
<text class="d" x="1597" y="713" textLength="85" lengthAdjust="spacingAndGlyphs">Elapsed time</text>
<text class="d" x="1733" y="713" textLength="80" lengthAdjust="spacingAndGlyphs">00:00:00.877</text>
<text class="d" x="1597" y="736" textLength="71" lengthAdjust="spacingAndGlyphs">Finish time</text>
<text class="d" x="1733" y="736" textLength="150" lengthAdjust="spacingAndGlyphs">10/8/2025 10:30:57 PM</text>
<text class="d" x="1597" y="759" textLength="39" lengthAdjust="spacingAndGlyphs">Name</text>
<text class="d" x="1733" y="759" textLength="129" lengthAdjust="spacingAndGlyphs">DESKTOP-3DHPULL</text>
<text class="d" x="1597" y="782" textLength="94" lengthAdjust="spacingAndGlyphs">Rows returned</text>
<text class="d" x="1733" y="782" textLength="16" lengthAdjust="spacingAndGlyphs">48</text>
<text class="d" x="1597" y="805" textLength="65" lengthAdjust="spacingAndGlyphs">Start time</text>
<text class="d" x="1733" y="805" textLength="150" lengthAdjust="spacingAndGlyphs">10/8/2025 10:30:56 PM</text>
<text class="d" x="1597" y="828" textLength="34" lengthAdjust="spacingAndGlyphs">State</text>
<text class="d" x="1733" y="828" textLength="36" lengthAdjust="spacingAndGlyphs">Open</text>
<text x="1597" y="874" textLength="116" lengthAdjust="spacingAndGlyphs">Connection name</text>
<text x="1733" y="874" textLength="138" lengthAdjust="spacingAndGlyphs">DESKTOP-3DHPULL (</text>
<text class="d" x="1597" y="920" textLength="130" lengthAdjust="spacingAndGlyphs">Connection elapsed</text>
<text class="d" x="1733" y="920" textLength="80" lengthAdjust="spacingAndGlyphs">00:00:00.877</text>
</svg>
<text class="b" x="1582" y="942" textLength="42" lengthAdjust="spacingAndGlyphs">Name</text>
<text x="1582" y="964" textLength="188" lengthAdjust="spacingAndGlyphs">The name of the connection.</text>

<!-- overlay -->
<rect x="1684" y="119" width="33" height="158" rx="4" fill="#1c1c1c"/>
<circle cx="1693" cy="129" r="4" fill="none" stroke="#ddd" stroke-width="1.800"/><path d="M1689 134l8-9" stroke="#ddd"/>
<rect x="1703" y="128" width="2" height="2" fill="#fff"/><rect x="1707" y="128" width="2" height="2" fill="#fff"/><rect x="1711" y="128" width="2" height="2" fill="#fff"/>
<rect x="1688" y="140" width="26" height="28" fill="#404040"/>
<path d="M1688 148h6l2-3h9l2 3h7v13h-26z" fill="#fff"/><circle cx="1700" cy="154" r="4.200" fill="none" stroke="#1c1c1c" stroke-width="1.500"/>
<rect x="1688" y="180" width="20" height="16" rx="1.500" fill="#fff"/><path d="M1708 186l6-5v14l-6-5z" fill="#fff"/>
<path d="M1688.500 228v-15h21" fill="none" stroke="#ddd" stroke-width="1.500"/><rect x="1691" y="215" width="23" height="17" fill="#fff"/>
<g transform="translate(1700 255.500) scale(.92) translate(-1700 -256)"><path d="M1697.500 244h5l.8 3 2.700 1 2.500-1.600 3.500 3.500-1.600 2.500 1 2.700 3 .8v5l-3 .8-1 2.700 1.600 2.500-3.500 3.500-2.500-1.600-2.700 1-.8 3h-5l-.8-3-2.700-1-2.500 1.600-3.500-3.500 1.600-2.500-1-2.700-3-.8v-5l3-.8 1-2.700-1.600-2.500 3.500-3.500 2.500 1.600 2.700-1z" fill="#fff"/><circle cx="1700" cy="256" r="4.500" fill="#1c1c1c"/></g>

<!-- watermark -->
<text transform="translate(830 987) scale(1.120 1)" x="0" y="0" style="font-family:'DejaVu Sans',sans-serif;font-size:62px;fill:#b4bac2;opacity:.5" textLength="204" lengthAdjust="spacingAndGlyphs">خمسات</text>
</svg>
</body></html>
